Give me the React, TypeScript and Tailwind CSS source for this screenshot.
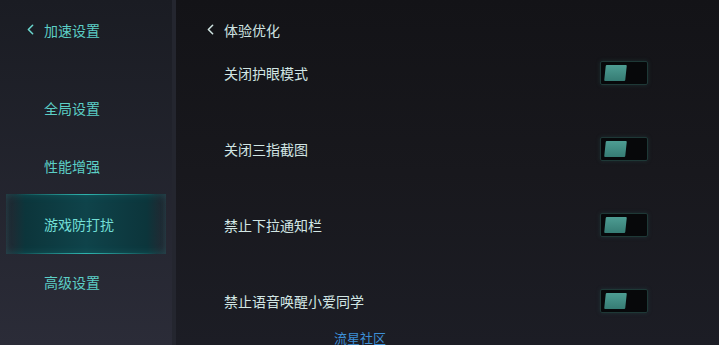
import { ChevronLeft } from "lucide-react";

const font = { fontFamily: '"Noto Sans CJK SC", "Noto Sans", sans-serif' };

const menu = ["全局设置", "性能增强", "游戏防打扰", "高级设置"];
const options = ["关闭护眼模式", "关闭三指截图", "禁止下拉通知栏", "禁止语音唤醒小爱同学"];

function Toggle() {
  return (
    <div className="w-[48px] h-[24px] rounded-[2px] border border-[#1e3836] bg-[#07080a] shadow-[0_0_4px_rgba(40,90,85,0.35)] flex items-center pl-[4px]">
      <div className="w-[21px] h-[16px] -skew-x-[6deg] rounded-[1px] bg-gradient-to-b from-[#4e9d93] to-[#367c74]" />
    </div>
  );
}

export default function App() {
  return (
    <div className="w-[719px] h-[345px] flex overflow-hidden" style={font}>
      <aside className="w-[176px] shrink-0 bg-gradient-to-b from-[#1a1c23] to-[#2b2c38] border-r-[4px] border-[#24262f]">
        <div className="h-[79px] pt-[20px] pl-[22px] flex items-start gap-[5px] text-[#5ccfc6]">
          <ChevronLeft size={17} strokeWidth={2.2} className="mt-[1px] text-[#6ad6ce]" />
          <span className="text-[14px] leading-[20px]">加速设置</span>
        </div>
        {menu.map((m) => {
          const on = m === "游戏防打扰";
          return (
            <div key={m} className="h-[58px] flex items-center">
              {on ? (
                <div className="relative w-full h-[60px] mx-[6px] flex items-center pl-[38px] bg-[linear-gradient(90deg,rgba(12,50,56,0)_0%,#0c353b_12%,#0f434a_50%,#0c353b_88%,rgba(12,50,56,0)_100%)] shadow-[inset_0_3px_6px_rgba(40,150,150,0.18),inset_0_-3px_6px_rgba(40,150,150,0.18)]">
                  <div className="absolute left-[10px] right-[10px] top-0 h-px bg-gradient-to-r from-transparent via-[#2eb3ad] to-transparent" />
                  <div className="absolute left-[10px] right-[10px] bottom-0 h-px bg-gradient-to-r from-transparent via-[#2eb3ad] to-transparent" />
                  <span className="text-[14px] leading-[20px] text-[#72dfd6]">{m}</span>
                </div>
              ) : (
                <span className="pl-[44px] text-[14px] leading-[20px] text-[#5ccfc6]">{m}</span>
              )}
            </div>
          );
        })}
      </aside>
      <main className="flex-1 bg-gradient-to-b from-[#131317] via-[#18181d] to-[#1c1d25]">
        <div className="h-[35px] pt-[20px] pl-[26px] flex items-start gap-[5px] text-[#cfe3e1]">
          <ChevronLeft size={17} strokeWidth={2.2} className="mt-[1px]" />
          <span className="text-[14px] leading-[20px]">体验优化</span>
        </div>
        <div className="pl-[48px] pr-[71px]">
          {options.map((o) => (
            <div key={o} className="h-[76px] flex items-center justify-between">
              <span className="text-[14px] leading-[20px] text-[#d2e6e4]">{o}</span>
              <Toggle />
            </div>
          ))}
        </div>
        <div className="-mt-[9px] pl-[158px] text-[13px] leading-[16px] text-[#3d8fd6]">流星社区</div>
      </main>
    </div>
  );
}
